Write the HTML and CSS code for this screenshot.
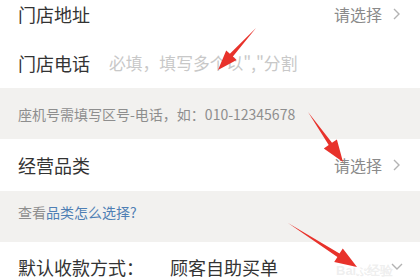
FILE: index.html
```html
<!DOCTYPE html>
<html lang="zh">
<head>
<meta charset="utf-8">
<link rel="stylesheet" href="styles.css">
</head>
<body>
<div class="screen">
  <div class="form">
    <div class="row row-line">
      <span class="label">门店地址</span>
      <span class="select">请选择<svg class="chev" width="7" height="12" viewBox="0 0 7 12"><polyline points="1,1 6,6 1,11" fill="none" stroke="#b3b3b3" stroke-width="1.4"/></svg></span>
    </div>
    <div class="row">
      <span class="label">门店电话</span>
      <span class="placeholder">必填，填写多个以","分割</span>
    </div>
    <div class="hint">座机号需填写区号-电话，如：010-12345678</div>
    <div class="row row-tall">
      <span class="label">经营品类</span>
      <span class="select">请选择<svg class="chev" width="7" height="12" viewBox="0 0 7 12"><polyline points="1,1 6,6 1,11" fill="none" stroke="#b3b3b3" stroke-width="1.4"/></svg></span>
    </div>
    <div class="hint hint-top">查看<span class="link">品类怎么选择?</span></div>
    <div class="row">
      <span class="label">默认收款方式：</span>
      <span class="value">顾客自助买单</span>
      <svg class="down" width="12" height="8" viewBox="0 0 12 8"><polyline points="1,1 6,6 11,1" fill="none" stroke="#b3b3b3" stroke-width="1.4"/></svg>
    </div>
  </div>
  <div class="watermark">Bai<span class="paw">ぷ</span>经验</div>
  <svg class="arrows" width="420" height="280" viewBox="0 0 420 280">
    <polygon points="256,28 232.9,56.5 236.6,59.9 218,70 226.2,50.5 229.9,53.8" fill="#e8322b"/>
    <polygon points="308,112 328.7,145.1 323.8,148.6 343,162 336.9,139.4 332.0,142.8" fill="#e8322b"/>
    <polygon points="288,223 337.4,256.9 334.2,261.9 357,267 342.8,248.4 339.5,253.5" fill="#e8322b"/>
  </svg>
</div>
</body>
</html>
```
FILE: styles.css
```css
html, body {
  margin: 0;
  padding: 0;
  background: #ffffff;
}
body {
  width: 420px;
  height: 280px;
  overflow: hidden;
  font-family: "Noto Sans CJK SC", "Noto Sans", sans-serif;
}
.screen {
  position: relative;
  width: 420px;
  height: 280px;
  overflow: hidden;
}
.form {
  margin-top: -11px;
}
.row {
  height: 50px;
  display: flex;
  align-items: center;
  padding: 0 20px 0 18px;
  background: #fff;
}
.row-line {
  height: 49px;
  box-shadow: inset 17px -1px 0 #fff, inset 0 -1px 0 #ececec;
}
.row-tall {
  height: 52px;
}
.label {
  font-size: 18px;
  color: #333;
  line-height: 1;
  white-space: nowrap;
}
.select {
  margin-left: auto;
  display: flex;
  align-items: center;
  font-size: 16px;
  color: #8a8a8a;
  line-height: 1;
}
.chev {
  margin-left: 11px;
}
.placeholder {
  margin-left: 19px;
  font-size: 16.8px;
  color: #c8c8c8;
  line-height: 1;
  white-space: nowrap;
}
.value {
  margin-left: 26px;
  font-size: 18px;
  color: #333;
  line-height: 1;
}
.down {
  margin-left: auto;
  margin-right: -3px;
}
.hint {
  height: 51px;
  box-sizing: border-box;
  background: #f2f1ef;
  display: flex;
  align-items: center;
  padding-left: 18px;
  font-size: 14px;
  color: #8e8e8e;
  line-height: 1;
}
.hint-top {
  align-items: flex-start;
  padding-top: 14px;
}
.link {
  color: #4f7fb4;
}
.watermark {
  position: absolute;
  left: 336px;
  top: 263px;
  font-size: 13px;
  line-height: 15px;
  font-family: "Liberation Sans", sans-serif;
  color: rgba(200, 200, 200, 0.3);
  font-weight: bold;
}
.paw {
  font-size: 11px;
}
.arrows {
  position: absolute;
  left: 0;
  top: 0;
  pointer-events: none;
}
```
